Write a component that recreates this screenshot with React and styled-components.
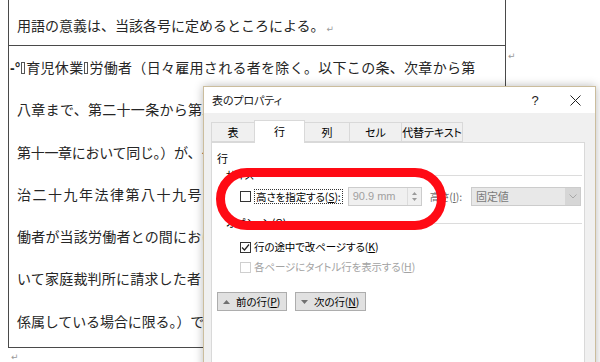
import React from 'react';
import styled, { createGlobalStyle } from 'styled-components';

const GlobalStyle = createGlobalStyle`
  html, body { margin: 0; padding: 0; background: #fff; overflow: hidden; }
  body { width: 600px; height: 362px; }
`;

const Screen = styled.div`
  position: relative;
  width: 600px;
  height: 362px;
  overflow: hidden;
  background: #fff;
`;

const Doc = styled.div`
  padding-left: 8px;
  font-family: "Noto Sans CJK JP", "Noto Sans CJK SC", sans-serif;
  color: #262626;
  font-size: 14px;
`;

const TableWrap = styled.div`
  display: flex;
  align-items: flex-start;
`;

const Table = styled.div`
  width: 498px;
  box-sizing: border-box;
  border-left: 1px solid #4a4a4a;
  border-right: 1px solid #4a4a4a;
  border-bottom: 1px solid #4a4a4a;
`;

const FirstRow = styled.div`
  height: 46px;
  box-sizing: border-box;
  border-bottom: 1px solid #4a4a4a;
  padding: 14px 0 0 8px;
  line-height: 22px;
  white-space: nowrap;
`;

const BodyRow = styled.div`
  padding: 0 0 5px 8px;
  overflow: hidden;
`;

const Line = styled.div`
  height: 42.3px;
  line-height: 42.3px;
  white-space: nowrap;
  letter-spacing: ${p => p.$spread || 0.2}px;
  margin-left: ${p => p.$indent || 0}px;
`;

const Mark = styled.span`
  font-family: "DejaVu Sans", sans-serif;
  font-size: 9px;
  color: #9a9a9a;
  margin-left: ${p => p.$gap || 2}px;
  vertical-align: ${p => p.$raise || 0}px;
`;

const SideMarks = styled.div`
  padding-top: 47px;
  line-height: 12px;
`;

const BelowMark = styled.div`
  padding: 1px 0 0 1px;
  line-height: 11px;
`;

const Tofu = styled.span`
  display: inline-block;
  width: 4px;
  height: 12px;
  box-sizing: border-box;
  border: 1px solid #555;
  margin: 0 1px;
  vertical-align: -1px;
`;

const Dash = styled.span`
  font-family: "Liberation Sans", sans-serif;
  font-weight: bold;
  letter-spacing: 0;
`;

/* ---------- dialog ---------- */

const Dialog = styled.div`
  position: absolute;
  left: 203px;
  top: 86px;
  width: 393px;
  height: 292px;
  box-sizing: border-box;
  border: 1px solid #cbbd9d;
  background: #f0f0f0;
  box-shadow: 0 0 9px rgba(0, 0, 0, 0.28);
  display: flex;
  flex-direction: column;
  font-family: "Noto Sans CJK JP", sans-serif;
  font-feature-settings: "palt";
  font-size: 10.5px;
  letter-spacing: -0.1px;
  color: #000;
  white-space: nowrap;
`;

const TitleBar = styled.div`
  height: 26px;
  background: #fff;
  display: flex;
  align-items: center;
  padding-left: 8px;
`;

const Title = styled.div`
  flex: 1;
  font-size: 11px;
  color: #1a1a1a;
`;

const TitleBtn = styled.div`
  width: 40px;
  height: 26px;
  display: flex;
  align-items: center;
  justify-content: center;
  font-family: "Liberation Sans", sans-serif;
  font-size: 13px;
  color: #222;
`;

const DialogBody = styled.div`
  flex: 1;
  display: flex;
  flex-direction: column;
  padding: 7px 10px 0 7px;
`;

const TabStrip = styled.div`
  display: flex;
  align-items: flex-end;
  height: 22px;
  position: relative;
  z-index: 1;
`;

const Tab = styled.div`
  width: ${p => p.$w}px;
  height: ${p => (p.$active ? 23 : 20)}px;
  margin-bottom: ${p => (p.$active ? -1 : 0)}px;
  box-sizing: border-box;
  border: 1px solid #d9d9d9;
  border-bottom: ${p => (p.$active ? 'none' : '1px solid #d9d9d9')};
  margin-left: -1px;
  background: ${p => (p.$active ? '#fff' : '#f0f0f0')};
  display: flex;
  align-items: center;
  justify-content: center;
  padding-bottom: ${p => (p.$active ? 2 : 0)}px;
  font-size: 11px;
  &:first-child { margin-left: 0; }
`;

const Panel = styled.div`
  flex: 1;
  background: #fff;
  border: 1px solid #d9d9d9;
  padding: 7px 2px 0 5px;
  display: flex;
  flex-direction: column;
`;

const Heading = styled.div`
  height: 16px;
  line-height: 16px;
  font-size: 11px;
`;

const GroupHeader = styled.div`
  height: 16px;
  line-height: 16px;
  display: flex;
  align-items: center;
  padding-left: 9px;
  margin-top: ${p => p.$mt}px;
  &::after {
    content: "";
    flex: 1;
    height: 1px;
    background: #dcdcdc;
    margin-left: 6px;
  }
`;

const ControlRow = styled.div`
  display: flex;
  align-items: center;
  height: 19px;
  margin-top: 4px;
  padding-left: 23px;
`;

const CheckRow = styled.div`
  display: flex;
  align-items: center;
  height: 16px;
  margin-top: ${p => p.$mt}px;
  padding-left: 23px;
  color: ${p => (p.$disabled ? '#a3a3a3' : '#000')};
`;

const Box = styled.span`
  width: 11px;
  height: 11px;
  box-sizing: border-box;
  border: 1px solid ${p => (p.$disabled ? '#cfcfcf' : '#333')};
  background: #fff;
  display: inline-flex;
  align-items: center;
  justify-content: center;
  margin-right: 3px;
  flex: none;
`;

const FocusLabel = styled.span`
  border: 1px dotted #333;
  line-height: 13px;
  padding: 0 1px;
`;

const Label = styled.span`
  line-height: 14px;
`;

const Key = styled.span`
  text-decoration: underline;
`;

const SpinBox = styled.div`
  width: 74px;
  height: 19px;
  box-sizing: border-box;
  border: 1px solid #cccccc;
  background: #f0f0f0;
  margin-left: 5px;
  display: flex;
  flex: none;
`;

const SpinText = styled.div`
  flex: 1;
  padding-left: 4px;
  line-height: 17px;
  color: #a0a0a0;
  font-family: "Liberation Sans", sans-serif;
  font-size: 11px;
  letter-spacing: 0;
`;

const SpinButtons = styled.div`
  width: 13px;
  border-left: 1px solid #dcdcdc;
  display: flex;
  flex-direction: column;
  align-items: center;
  justify-content: center;
  gap: 3px;
`;

const StaticLabel = styled.span`
  margin-left: 8px;
  color: #6d6d6d;
  line-height: 14px;
`;

const Combo = styled.div`
  width: 110px;
  height: 19px;
  box-sizing: border-box;
  border: 1px solid #cccccc;
  background: #e8e8e8;
  margin-left: auto;
  margin-right: 1px;
  display: flex;
  flex: none;
`;

const ComboText = styled.div`
  flex: 1;
  padding-left: 4px;
  line-height: 17px;
  color: #7a7a7a;
  font-size: 11px;
`;

const ComboButton = styled.div`
  width: 15px;
  background: #d6d6d6;
  display: flex;
  align-items: center;
  justify-content: center;
`;

const ButtonRow = styled.div`
  display: flex;
  gap: 8px;
  margin-top: 17px;
`;

const NavButton = styled.div`
  width: ${p => p.$w}px;
  height: 19px;
  box-sizing: border-box;
  background: #e1e1e1;
  border: 1px solid #adadad;
  display: flex;
  align-items: center;
  padding-left: 5px;
  gap: 6px;
  line-height: 17px;
`;

const Highlight = styled.div`
  position: absolute;
  left: 216px;
  top: 168px;
  width: 230px;
  height: 62px;
  box-sizing: border-box;
  border: 9px solid #ff0a14;
  border-radius: 31px;
  pointer-events: none;
`;

const Tri = ({ up }) => (
  <svg width="7" height="4" viewBox="0 0 7 4">
    <path d={up ? 'M0 4 L3.5 0 L7 4 Z' : 'M0 0 L3.5 4 L7 0 Z'} fill="#707070" />
  </svg>
);

const TinyTri = ({ up }) => (
  <svg width="5" height="3" viewBox="0 0 5 3">
    <path d={up ? 'M0 3 L2.5 0 L5 3 Z' : 'M0 0 L2.5 3 L5 0 Z'} fill="#9a9a9a" />
  </svg>
);

export default function App() {
  return (
    <>
      <GlobalStyle />
      <Screen>
        <Doc>
          <TableWrap>
            <Table>
              <FirstRow>
                用語の意義は、当該各号に定めるところによる。<Mark $raise={-1}>↵</Mark>
              </FirstRow>
              <BodyRow>
                <Line $indent={-7} $spread={0.3}>
                  <Dash>-°</Dash><Tofu />育児休業<Tofu />労働者（日々雇用される者を除く。以下この条、次章から第
                </Line>
                <Line $spread={0.3}>八章まで、第二十一条から第二十四条まで、第二十五条、第二十五条の二、</Line>
                <Line $spread={-0.3}>第十一章において同じ。）が、その養育する一歳に満たない子について、民法（明</Line>
                <Line $spread={1.5}>治二十九年法律第八十九号）第八百十七条の二第一項の規定により労</Line>
                <Line $spread={0.2}>働者が当該労働者との間における同項に規定する特別養子縁組の成立につ</Line>
                <Line $spread={0.2}>いて家庭裁判所に請求した者（当該請求に係る家事審判事件が裁判所に</Line>
                <Line $spread={-0.1}>係属している場合に限る。）であって、当該労働者が現に監護するもの</Line>
              </BodyRow>
            </Table>
            <SideMarks>
              <Mark>↵</Mark>
            </SideMarks>
          </TableWrap>
          <BelowMark>
            <Mark $gap={0}>↵</Mark>
          </BelowMark>
        </Doc>

        <Dialog>
          <TitleBar>
            <Title>表のプロパティ</Title>
            <TitleBtn>?</TitleBtn>
            <TitleBtn>
              <svg width="11" height="11" viewBox="0 0 11 11">
                <path d="M0.5 0.5 L10.5 10.5 M10.5 0.5 L0.5 10.5" stroke="#222" strokeWidth="1" />
              </svg>
            </TitleBtn>
          </TitleBar>
          <DialogBody>
            <TabStrip>
              <Tab $w={44}>表</Tab>
              <Tab $w={51} $active>行</Tab>
              <Tab $w={46}>列</Tab>
              <Tab $w={53}>セル</Tab>
              <Tab $w={62}>代替テキスト</Tab>
            </TabStrip>
            <Panel>
              <Heading>行</Heading>
              <GroupHeader $mt={1}>サイズ</GroupHeader>
              <ControlRow>
                <Box />
                <FocusLabel>高さを指定する(<Key>S</Key>):</FocusLabel>
                <SpinBox>
                  <SpinText>90.9 mm</SpinText>
                  <SpinButtons>
                    <TinyTri up />
                    <TinyTri />
                  </SpinButtons>
                </SpinBox>
                <StaticLabel>高さ(<Key>I</Key>):</StaticLabel>
                <Combo>
                  <ComboText>固定値</ComboText>
                  <ComboButton>
                    <svg width="8" height="5" viewBox="0 0 8 5">
                      <path d="M0.5 0.5 L4 4 L7.5 0.5" stroke="#a8a8a8" strokeWidth="1" fill="none" />
                    </svg>
                  </ComboButton>
                </Combo>
              </ControlRow>
              <GroupHeader $mt={9}>オプション(<Key>O</Key>)</GroupHeader>
              <CheckRow $mt={8}>
                <Box>
                  <svg width="9" height="9" viewBox="0 0 9 9">
                    <path d="M1 4.5 L3.5 7 L8 1.5" stroke="#222" strokeWidth="1.2" fill="none" />
                  </svg>
                </Box>
                <Label>行の途中で改ページする(<Key>K</Key>)</Label>
              </CheckRow>
              <CheckRow $mt={4} $disabled>
                <Box $disabled />
                <Label>各ページにタイトル行を表示する(<Key>H</Key>)</Label>
              </CheckRow>
              <ButtonRow>
                <NavButton $w={70}>
                  <Tri up />
                  <span>前の行(<Key>P</Key>)</span>
                </NavButton>
                <NavButton $w={71}>
                  <Tri />
                  <span>次の行(<Key>N</Key>)</span>
                </NavButton>
              </ButtonRow>
            </Panel>
          </DialogBody>
        </Dialog>

        <Highlight />
      </Screen>
    </>
  );
}
